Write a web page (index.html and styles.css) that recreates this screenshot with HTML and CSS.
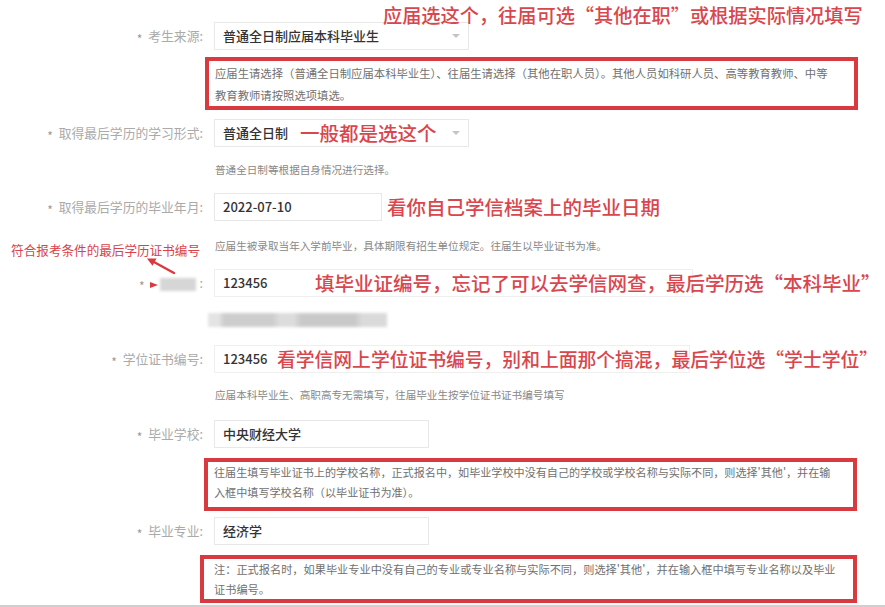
FILE: index.html
```html
<!DOCTYPE html>
<html lang="zh-CN">
<head>
<meta charset="utf-8">
<title>报名信息</title>
<link rel="stylesheet" href="styles.css">
</head>
<body>
<div class="form">
  <div class="row">
    <div class="label"><span class="star">*</span> 考生来源:</div>
    <div class="field select w-select"><span>普通全日制应届本科毕业生</span><i class="caret"></i></div>
    <span class="anno anno-top">应届选这个，往届可选“其他在职”或根据实际情况填写</span>
  </div>
  <div class="note note-1">应届生请选择（普通全日制应届本科毕业生）、往届生请选择（其他在职人员）。其他人员如科研人员、高等教育教师、中等<br>教育教师请按照选项填选。</div>

  <div class="row row-2">
    <div class="label"><span class="star">*</span> 取得最后学历的学习形式:</div>
    <div class="field select w-select"><span>普通全日制</span><i class="caret"></i></div>
    <span class="anno anno-2">一般都是选这个</span>
  </div>
  <div class="help-row help-1">
    <div class="label"></div>
    <div class="help">普通全日制等根据自身情况进行选择。</div>
  </div>

  <div class="row row-3">
    <div class="label"><span class="star">*</span> 取得最后学历的毕业年月:</div>
    <div class="field w-date">2022-07-10</div>
    <span class="anno anno-3">看你自己学信档案上的毕业日期</span>
  </div>
  <div class="help-row help-2">
    <div class="label side-note">符合报考条件的最后学历证书编号</div>
    <div class="help">应届生被录取当年入学前毕业，具体期限有招生单位规定。往届生以毕业证书为准。</div>
  </div>

  <div class="row row-4">
    <div class="label"><span class="star">*</span> <i class="red-tip"></i><i class="blurred"></i>:</div>
    <div class="field w-long">123456</div>
    <span class="anno anno-4">填毕业证编号，忘记了可以去学信网查，最后学历选“本科毕业”</span>
    <svg class="arrow" width="40" height="26" viewBox="0 0 40 26">
      <line x1="34" y1="21" x2="13" y2="9.5" stroke="#d93a3f" stroke-width="2.4" stroke-linecap="round"/>
      <polygon points="7,6.5 16.5,6.5 12.5,13.8" fill="#d93a3f"/>
    </svg>
  </div>
  <div class="blur-row"><div class="blur-bar"></div></div>

  <div class="row row-5">
    <div class="label"><span class="star">*</span> 学位证书编号:</div>
    <div class="field w-long2">123456</div>
    <span class="anno anno-5">看学信网上学位证书编号，别和上面那个搞混，最后学位选“学士学位”</span>
  </div>
  <div class="help-row help-3">
    <div class="label"></div>
    <div class="help">应届本科毕业生、高职高专无需填写，往届毕业生按学位证书证书编号填写</div>
  </div>

  <div class="row row-6">
    <div class="label"><span class="star">*</span> 毕业学校:</div>
    <div class="field w-mid">中央财经大学</div>
  </div>
  <div class="note note-2">往届生填写毕业证书上的学校名称，正式报名中，如毕业学校中没有自己的学校或学校名称与实际不同，则选择'其他'，并在输<br>入框中填写学校名称（以毕业证书为准）。</div>

  <div class="row row-7">
    <div class="label"><span class="star">*</span> 毕业专业:</div>
    <div class="field w-mid">经济学</div>
  </div>
  <div class="note note-3">注：正式报名时，如果毕业专业中没有自己的专业或专业名称与实际不同，则选择'其他'，并在输入框中填写专业名称以及毕业<br>证书编号。</div>
  <div class="bottom-line"></div>
</div>
</body>
</html>
```

FILE: styles.css
```css
* { box-sizing: border-box; }
html, body {
  margin: 0;
  padding: 0;
  background: #fff;
}
body {
  font-family: "Noto Sans CJK SC", "Noto Sans", sans-serif;
  width: 885px;
  height: 607px;
  overflow: hidden;
}
.form {
  padding-top: 22px;
}
.row {
  position: relative;
  display: flex;
  align-items: center;
  height: 28px;
}
.label {
  width: 214px;
  flex: none;
  padding-right: 11px;
  text-align: right;
  font-size: 12.8px;
  color: #aaa;
  white-space: nowrap;
  line-height: 28px;
}
.star {
  display: inline-block;
  color: #999;
  font-size: 12px;
  margin-right: 3px;
  vertical-align: -3px;
  line-height: 1;
}
.field {
  height: 28px;
  border: 1px solid #e8e8e8;
  padding-left: 8px;
  font-size: 13px;
  line-height: 26px;
  color: #333;
  font-weight: 500;
  background: #fff;
}
.select {
  display: flex;
  justify-content: space-between;
  align-items: center;
  padding-right: 8px;
}
.caret {
  width: 0;
  height: 0;
  border-left: 4px solid transparent;
  border-right: 4px solid transparent;
  border-top: 4px solid #c4c4c4;
}
.w-select { width: 255px; }
.w-date { width: 168px; }
.w-long { width: 479px; border-color: #efefef; }
.w-long2 { width: 476px; border-color: #efefef; }
.w-mid { width: 215px; }

.anno {
  position: absolute;
  top: 50%;
  transform: translateY(-50%);
  color: #d9464d;
  font-size: 19.5px;
  line-height: 26px;
  white-space: nowrap;
  font-weight: 500;
}
.anno-top { left: 383px; top: -7px; font-size: 19.2px; }
.anno-2 { left: 300px; }
.anno-3 { left: 387px; }
.anno-4 { left: 315px; }
.anno-5 { left: 277px; font-size: 18.8px; }

.note {
  margin-top: 7px;
  margin-left: 205px;
  width: 653px;
  border: 4px solid #d93a3f;
  padding-left: 6px;
  font-size: 11.1px;
  color: #707070;
  white-space: nowrap;
}
.note-1 { line-height: 22px; padding-top: 1px; font-size: 11.35px; }
.note-2 { margin-top: 10px; margin-left: 204px; line-height: 20px; padding-bottom: 5px; }
.note-3 { margin-top: 10px; margin-left: 200px; width: 657px; padding-left: 10px; line-height: 20px; font-size: 11.2px; }

.row-2 { margin-top: 9px; }
.row-3 { margin-top: 13px; }
.row-4 { margin-top: 5px; }
.row-5 { margin-top: 18px; }
.row-6 { margin-top: 15px; }
.row-7 { margin-top: 6px; }

.help-row {
  display: flex;
  align-items: flex-start;
}
.help {
  font-size: 10.6px;
  color: #888;
  line-height: 20px;
  padding-left: 1px;
  white-space: nowrap;
}
.help-1 { margin-top: 13px; }
.help-2 { margin-top: 15px; }
.help-3 { margin-top: 12px; }
.side-note {
  color: #d8424a;
  font-size: 12.6px;
  padding-right: 14px;
  line-height: 28px;
}

.red-tip {
  display: inline-block;
  width: 0;
  height: 0;
  border-top: 3px solid transparent;
  border-bottom: 3px solid transparent;
  border-left: 8px solid #d93a3f;
  margin-right: 2px;
  vertical-align: middle;
}
.blurred {
  display: inline-block;
  width: 36px;
  height: 13px;
  background: #d6d6d6;
  filter: blur(1.5px);
  vertical-align: middle;
  margin-right: 3px;
}
.arrow {
  position: absolute;
  left: 140px;
  top: -17px;
}

.blur-row {
  margin-top: 16px;
  padding-left: 208px;
  height: 14px;
}
.blur-bar {
  width: 179px;
  height: 14px;
  background: linear-gradient(90deg, #e4e4e4 0 6%, #cdcdcd 9% 36%, #dcdcdc 40% 48%, #c9c9c9 52% 82%, #dadada 86% 100%);
  filter: blur(1.5px);
}

.bottom-line {
  margin-top: 2px;
  height: 2px;
  background: #cfcfcf;
}
```
